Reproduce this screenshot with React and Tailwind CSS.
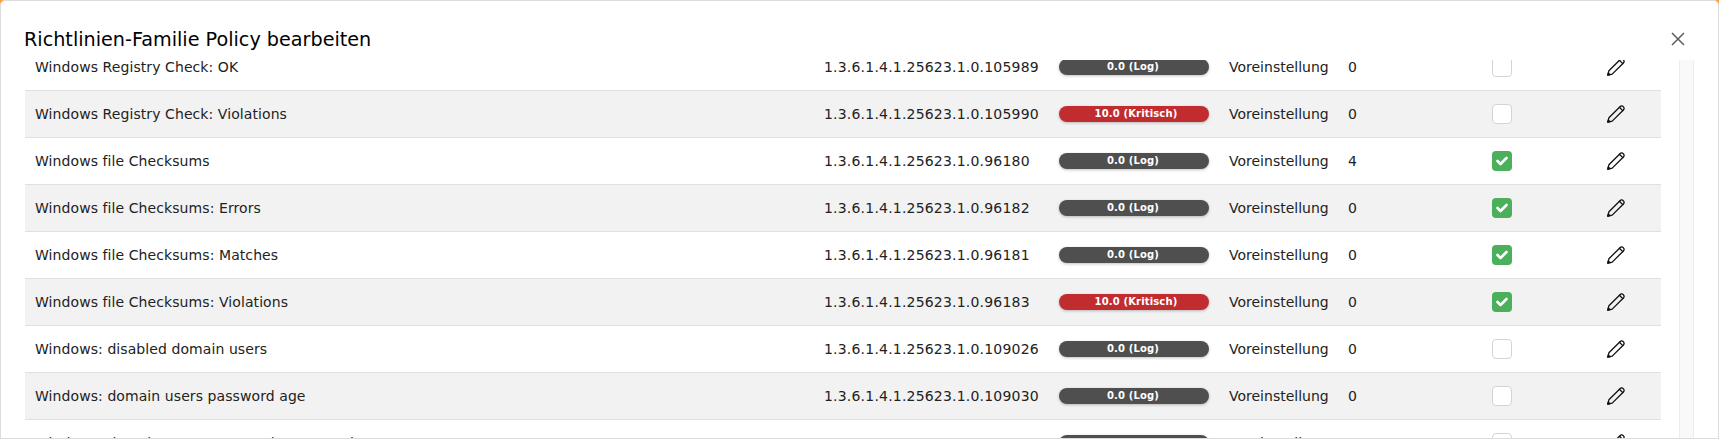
import React from 'react';

const rows = [
  { name: 'Windows Registry Check: OK', oid: '1.3.6.1.4.1.25623.1.0.105989', sev: 'log', count: 0, on: false },
  { name: 'Windows Registry Check: Violations', oid: '1.3.6.1.4.1.25623.1.0.105990', sev: 'crit', count: 0, on: false },
  { name: 'Windows file Checksums', oid: '1.3.6.1.4.1.25623.1.0.96180', sev: 'log', count: 4, on: true },
  { name: 'Windows file Checksums: Errors', oid: '1.3.6.1.4.1.25623.1.0.96182', sev: 'log', count: 0, on: true },
  { name: 'Windows file Checksums: Matches', oid: '1.3.6.1.4.1.25623.1.0.96181', sev: 'log', count: 0, on: true },
  { name: 'Windows file Checksums: Violations', oid: '1.3.6.1.4.1.25623.1.0.96183', sev: 'crit', count: 0, on: true },
  { name: 'Windows: disabled domain users', oid: '1.3.6.1.4.1.25623.1.0.109026', sev: 'log', count: 0, on: false },
  { name: 'Windows: domain users password age', oid: '1.3.6.1.4.1.25623.1.0.109030', sev: 'log', count: 0, on: false },
  { name: 'Windows: domain users password never expires', oid: '1.3.6.1.4.1.25623.1.0.109027', sev: 'log', count: 0, on: false },
];

const PencilIcon = () => (
  <svg width="18" height="18" viewBox="0 0 18 18" fill="none" stroke="#111" strokeWidth="1.3" strokeLinejoin="round" strokeLinecap="round">
    <path d="M0.8 17.2 L1.9 12.8 L13 1.7 C13.9 0.8 15.3 0.6 16.3 1.7 C17.4 2.7 17.3 4.1 16.4 5 L5.2 16.1 Z" />
    <path d="M0.8 17.2 L1.3 15 L3 16.7 Z" fill="#111" />
    <path d="M12.4 2.3 L15.8 5.6" />
  </svg>
);

const Row = ({ row, striped }) => (
  <div className={`grid grid-cols-[789px_235px_170px_263px_115px_1fr] items-center h-[47px] pl-[10px] border-b border-[#e0e0e0] ${striped ? 'bg-[#f2f2f2]' : 'bg-white'}`}>
    <span className="tracking-[0.08px]">{row.name}</span>
    <span className="tracking-[0.2px]">{row.oid}</span>
    <div>
      <div className={`w-[150px] h-4 rounded-lg text-white text-[10px] font-bold leading-4 text-center shadow-[0_1px_3px_rgba(0,0,0,0.25)] tracking-[0.15px] ${row.sev === 'crit' ? 'bg-[#c12c30] pl-1' : 'bg-[#4f4f4f] pr-0.5'}`}>
        {row.sev === 'crit' ? '10.0 (Kritisch)' : '0.0 (Log)'}
      </div>
    </div>
    <div className="flex">
      <span className="w-[119px]">Voreinstellung</span>
      <span>{row.count}</span>
    </div>
    <div>
      {row.on ? (
        <div className="w-5 h-5 rounded-[4px] bg-[#4caf5b] flex items-center justify-center">
          <svg width="12" height="10" viewBox="0 0 12 10" fill="none" stroke="white" strokeWidth="2.6" strokeLinecap="round" strokeLinejoin="round">
            <path d="M1.5 5 L4.5 8 L10.5 2" />
          </svg>
        </div>
      ) : (
        <div className="w-5 h-5 rounded-[4px] bg-white border border-[#d4d4d4]" />
      )}
    </div>
    <PencilIcon />
  </div>
);

export default function App() {
  return (
    <div className="w-[1719px] h-[439px] bg-[#f5a33c] overflow-hidden font-['DejaVu_Sans',sans-serif] text-[#222] text-[14px]">
      <div className="h-[439px] bg-white border border-[#dcdcdc] rounded-t-[5px] flex flex-col">
        <div className="h-[59px] shrink-0 flex items-center justify-between pl-[23px] pr-[33px] pt-[18px]">
          <h2 className="text-[19.2px] text-black leading-none">Richtlinien-Familie Policy bearbeiten</h2>
          <svg className="-mt-[2px]" width="14" height="14" viewBox="0 0 14 14" fill="none" stroke="#5c5c5c" strokeWidth="1.5">
            <path d="M1 1 L13 13 M13 1 L1 13" />
          </svg>
        </div>
        <div className="flex-1 flex overflow-hidden pl-[24px]">
          <div className="w-[1636px] shrink-0 -mt-[16px]">
            {rows.map((row, i) => (
              <Row key={row.oid} row={row} striped={i % 2 === 1} />
            ))}
          </div>
          <div className="w-[15px] ml-[18px] bg-[#f9f9f9] border-x border-[#ededed]" />
        </div>
      </div>
    </div>
  );
}
